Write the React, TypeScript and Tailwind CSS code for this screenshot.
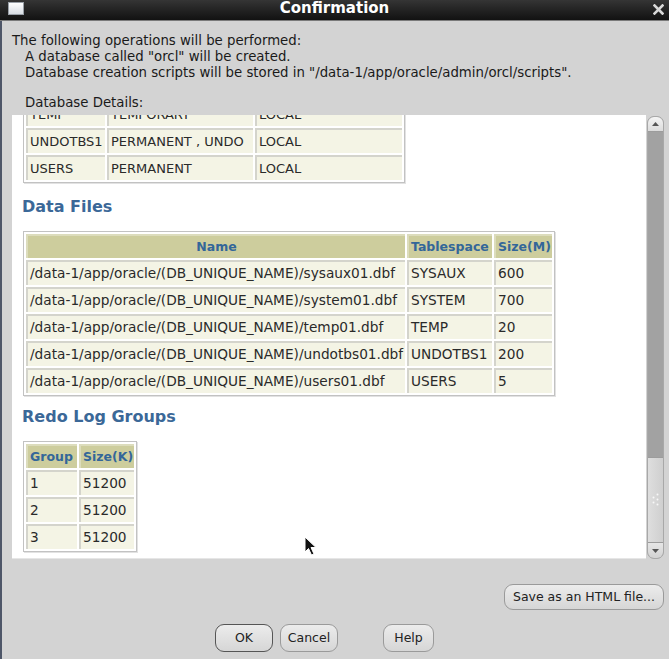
import React from "react";

const cellBase =
  "bg-[#f4f4e5] border-t-2 border-l-2 border-[#d4d4cc] pl-[2px] text-left align-middle whitespace-nowrap";
const headBase =
  "bg-[#cdcd9d] border-t-2 border-l-2 border-[#dcdcbc] text-[#336699] font-bold text-[12.5px] whitespace-nowrap";

function Table({
  widths,
  head,
  rows,
  headAlign,
  rowH = 25,
  small,
}: {
  widths: number[];
  head?: string[];
  rows: string[][];
  headAlign?: ("left" | "center")[];
  rowH?: number;
  small?: boolean;
}) {
  return (
    <table
      className={
        "border-separate border-spacing-[2px] border border-[#c2c2c2] shadow-[1px_1px_0_#e2e2e2] bg-white text-[#2a2a2a] leading-none " +
        (small ? "text-[13px]" : "text-[13.7px]")
      }
    >
      <tbody>
        {head && (
          <tr>
            {head.map((h, i) => (
              <td
                key={i}
                style={{ width: widths[i], height: 24 }}
                className={headBase + (headAlign && headAlign[i] === "center" ? " text-center" : " text-left pl-[2px]")}
              >
                {h}
              </td>
            ))}
          </tr>
        )}
        {rows.map((r, ri) => (
          <tr key={ri}>
            {r.map((c, ci) => (
              <td key={ci} style={{ width: widths[ci], height: rowH }} className={cellBase}>
                {c}
              </td>
            ))}
          </tr>
        ))}
      </tbody>
    </table>
  );
}

function Btn({ children, w, def }: { children: React.ReactNode; w: number; def?: boolean }) {
  return (
    <div
      style={{ width: w }}
      className={
        "h-full flex items-center justify-center rounded-[9px] bg-gradient-to-b from-[#ececec] to-[#d6d6d6] text-[12.5px] text-[#222] " +
        (def ? "border-[1.5px] border-[#555]" : "border border-[#9a9a9a]")
      }
    >
      {children}
    </div>
  );
}

export default function App() {
  return (
    <div
      className="w-[669px] h-[659px] bg-[#d3d3d3] flex flex-col overflow-hidden relative"
      style={{ fontFamily: '"DejaVu Sans", "Liberation Sans", sans-serif' }}
    >
      {/* Title bar */}
      <div className="h-[21px] shrink-0 bg-gradient-to-b from-[#353535] to-[#121212] border-b border-[#7a7a7a] flex items-center relative">
        <div className="ml-[8px] w-[16px] h-[13px] -mt-[3px] bg-gradient-to-b from-[#ffffff] to-[#d8dde4] border border-[#9aa0a8]" />
        <div className="absolute left-0 right-0 top-0 h-[20px] flex items-center justify-center text-white font-bold text-[15px] leading-none -mt-[2px]">
          Confirmation
        </div>
        <div className="ml-auto mr-[5px] -mt-[2px]">
          <svg width="11" height="11" viewBox="0 0 11 11">
            <path d="M1.5 1.5 L9.5 9.5 M9.5 1.5 L1.5 9.5" stroke="#d8d8d8" strokeWidth="2.6" strokeLinecap="square" />
          </svg>
        </div>
      </div>

      {/* Body */}
      <div className="flex-1 flex flex-col border-l-2 border-[#4e5668] pl-[10px] pr-[5px] pt-[12px]">
        <div className="text-[13.3px] leading-[16px] text-[#1a1a1a]">
          <div>The following operations will be performed:</div>
          <div className="pl-[13px]">A database called "orcl" will be created.</div>
          <div className="pl-[13px]">
            Database creation scripts will be stored in "/data-1/app/oracle/admin/orcl/scripts".
          </div>
          <div className="pl-[13px] mt-[14px]">Database Details:</div>
        </div>

        {/* Scroll panel */}
        <div className="mt-[4px] h-[444px] flex">
          <div className="flex-1 bg-white overflow-hidden border-b border-[#e6e6e6] pl-[11px]">
            <div className="-mt-[17px]">
              <Table
                small
                widths={[79, 146, 147]}
                rows={[
                  ["TEMP", "TEMPORARY", "LOCAL"],
                  ["UNDOTBS1", "PERMANENT , UNDO", "LOCAL"],
                  ["USERS", "PERMANENT", "LOCAL"],
                ]}
              />
            </div>
            <div className="mt-[14px] h-[20px] leading-[20px] text-[16px] font-bold text-[#3b6898] -ml-[1px]">
              Data Files
            </div>
            <div className="mt-[14px]">
              <Table
                widths={[379, 85, 58]}
                head={["Name", "Tablespace", "Size(M)"]}
                headAlign={["center", "left", "left"]}
                rows={[
                  ["/data-1/app/oracle/(DB_UNIQUE_NAME)/sysaux01.dbf", "SYSAUX", "600"],
                  ["/data-1/app/oracle/(DB_UNIQUE_NAME)/system01.dbf", "SYSTEM", "700"],
                  ["/data-1/app/oracle/(DB_UNIQUE_NAME)/temp01.dbf", "TEMP", "20"],
                  ["/data-1/app/oracle/(DB_UNIQUE_NAME)/undotbs01.dbf", "UNDOTBS1", "200"],
                  ["/data-1/app/oracle/(DB_UNIQUE_NAME)/users01.dbf", "USERS", "5"],
                ]}
              />
            </div>
            <div className="mt-[11px] h-[20px] leading-[20px] text-[16px] font-bold text-[#3b6898] -ml-[1px]">
              Redo Log Groups
            </div>
            <div className="mt-[14px]">
              <Table
                widths={[51, 55]}
                head={["Group", "Size(K)"]}
                headAlign={["left", "left"]}
                rows={[
                  ["1", "51200"],
                  ["2", "51200"],
                  ["3", "51200"],
                ]}
              />
            </div>
          </div>
          {/* Scrollbar */}
          <div className="w-[17px] flex flex-col border border-[#a8a8a8] rounded-[7px] overflow-hidden bg-[#a2a2a2] mt-[1px] ml-[1px]">
            <div className="h-[15px] bg-gradient-to-b from-[#f4f4f4] to-[#dcdcdc] border-b border-[#9c9c9c] flex items-center justify-center">
              <svg width="7" height="4" viewBox="0 0 7 4">
                <path d="M0 4 L3.5 0 L7 4 Z" fill="#555" />
              </svg>
            </div>
            <div className="flex-1" />
            <div className="h-[86px] bg-gradient-to-r from-[#dedede] to-[#cfcfcf] border-y border-[#9c9c9c] flex items-center justify-center">
              <svg width="9" height="14" viewBox="0 0 9 14">
                <g fill="#f8f8f8">
                  <circle cx="6.5" cy="1.5" r="1" />
                  <circle cx="2.5" cy="4.5" r="1" />
                  <circle cx="6.5" cy="6.5" r="1" />
                  <circle cx="2.5" cy="9.5" r="1" />
                  <circle cx="6.5" cy="11.5" r="1" />
                </g>
              </svg>
            </div>
            <div className="h-[15px] bg-gradient-to-b from-[#e6e6e6] to-[#d2d2d2] flex items-center justify-center">
              <svg width="7" height="4" viewBox="0 0 7 4">
                <path d="M0 0 L3.5 4 L7 0 Z" fill="#555" />
              </svg>
            </div>
          </div>
        </div>

        {/* Save button */}
        <div className="mt-[25px] h-[26px] flex justify-end pr-[0px]">
          <Btn w={160}>Save as an HTML file...</Btn>
        </div>

        {/* Bottom buttons */}
        <div className="mt-[14px] h-[28px] flex pl-[203px]">
          <Btn w={58} def>
            OK
          </Btn>
          <div className="w-[7px]" />
          <Btn w={58}>Cancel</Btn>
          <div className="w-[45px]" />
          <Btn w={51}>Help</Btn>
        </div>
      </div>

      {/* Mouse cursor */}
      <svg className="absolute left-[304px] top-[536px]" width="14" height="20" viewBox="0 0 14 20">
        <path d="M1 1 L1 16 L4.5 12.5 L7.5 19 L10 18 L7 11.5 L12 11.5 Z" fill="#111" stroke="#fff" strokeWidth="1" />
      </svg>
    </div>
  );
}
